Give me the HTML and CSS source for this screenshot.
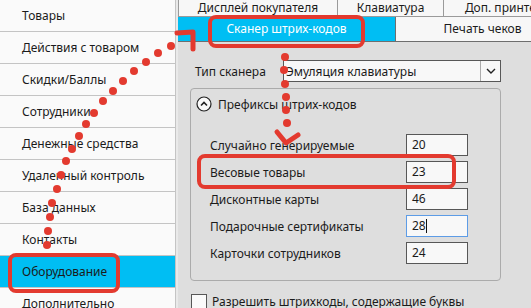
FILE: index.html
```html
<!DOCTYPE html>
<html>
<head>
  <title>Оборудование</title>
  <meta charset="utf-8">
  <link rel="stylesheet" href="styles.css">
</head>
<body>
  <div class="app">
    <ul class="nav">
      <li>Товары</li>
      <li>Действия с товаром</li>
      <li>Скидки/Баллы</li>
      <li>Сотрудники</li>
      <li>Денежные средства</li>
      <li>Удаленный контроль</li>
      <li>База данных</li>
      <li>Контакты</li>
      <li class="active">Оборудование</li>
      <li>Дополнительно</li>
    </ul>

    <div class="main">
      <div class="tabs tabs-top">
        <div class="tab t-display">Дисплей покупателя</div>
        <div class="tab t-keys">Клавиатура</div>
        <div class="tab t-printer">Доп. принтер</div>
      </div>
      <div class="tabs tabs-second">
        <div class="tab t-scanner active">Сканер штрих-кодов</div>
        <div class="tab t-receipt">Печать чеков</div>
      </div>

      <div class="panel">
        <div class="field">
          <span class="field-label">Тип сканера</span>
          <div class="select">
            <span class="select-value">Эмуляция клавиатуры</span>
            <span class="select-btn">
              <svg width="10" height="6" viewBox="0 0 10 6"><path d="M1 1 L5 5 L9 1" fill="none" stroke="#222" stroke-width="1.4"/></svg>
            </span>
          </div>
        </div>

        <div class="group">
          <div class="group-head">
            <svg class="collapse" width="16" height="16" viewBox="0 0 16 16">
              <circle cx="8" cy="8" r="7" fill="#fafafa" stroke="#222" stroke-width="1.2"/>
              <path d="M5 9.5 L8 6.5 L11 9.5" fill="none" stroke="#222" stroke-width="1.6"/>
            </svg>
            <span>Префиксы штрих-кодов</span>
          </div>
          <div class="rows">
            <div class="row"><span>Случайно генерируемые</span><div class="input">20</div></div>
            <div class="row"><span>Весовые товары</span><div class="input">23</div></div>
            <div class="row"><span>Дисконтные карты</span><div class="input">46</div></div>
            <div class="row"><span>Подарочные сертификаты</span><div class="input focus">28<i class="caret"></i></div></div>
            <div class="row"><span>Карточки сотрудников</span><div class="input">24</div></div>
          </div>
        </div>

        <div class="check">
          <span class="box"></span>
          <span>Разрешить штрихкоды, содержащие буквы</span>
        </div>
      </div>
    </div>
  </div>

  <svg class="marks" width="531" height="308" viewBox="0 0 531 308">
    <g fill="none" stroke="#e33a2f" stroke-width="4" stroke-linejoin="round">
      <rect x="10" y="255" width="108" height="36" rx="6"/>
      <rect x="210" y="17" width="153" height="29" rx="6"/>
      <rect x="199" y="156" width="255" height="31" rx="6"/>
    </g>
    <g fill="#e33a2f">
      <circle cx="47" cy="245" r="4"/>
      <circle cx="48" cy="231" r="4"/>
      <circle cx="50" cy="217" r="4"/>
      <circle cx="52" cy="203" r="4"/>
      <circle cx="57" cy="189" r="4"/>
      <circle cx="61" cy="175" r="4"/>
      <circle cx="66" cy="161" r="4"/>
      <circle cx="72" cy="149" r="4"/>
      <circle cx="79" cy="136" r="4"/>
      <circle cx="86" cy="124" r="4"/>
      <circle cx="94" cy="113" r="4"/>
      <circle cx="103" cy="101" r="4"/>
      <circle cx="113" cy="91" r="4"/>
      <circle cx="123" cy="81" r="4"/>
      <circle cx="134" cy="71" r="4"/>
      <circle cx="146" cy="62" r="4"/>
      <circle cx="158" cy="53" r="4"/>
      <circle cx="171" cy="46" r="4"/>
      <circle cx="285" cy="57" r="4"/>
      <circle cx="284" cy="70" r="4"/>
      <circle cx="285" cy="84" r="4"/>
      <circle cx="286" cy="97" r="4"/>
      <circle cx="286" cy="110" r="4"/>
      <circle cx="287" cy="123" r="4"/>
    </g>
    <g fill="none" stroke="#e33a2f" stroke-width="5" stroke-linecap="round" stroke-linejoin="round">
      <polyline points="177,33 193,32 193,49"/>
      <polyline points="277,132 286,143 298,135"/>
    </g>
  </svg>
</body>
</html>
```

FILE: styles.css
```css
body { margin: 0; width: 531px; height: 308px; overflow: hidden; position: relative; background: #e9e9e9; font-family: "Noto Sans", "Open Sans", sans-serif; font-size: 12px; color: #1b1b1b; }
.app { display: flex; height: 308px; }

.nav { list-style: none; margin: 0; padding: 0; width: 175px; flex: none; background: #fafafa; border-right: 1px solid #c4c4c4; }
.nav li { height: 31px; line-height: 31px; padding-left: 22px; border-bottom: 1px solid #c4c4c4; white-space: nowrap; }
.nav li.active { background: #00bef3; }

.main { flex: 1; margin-left: 2px; display: flex; flex-direction: column; min-width: 0; overflow: hidden; }
.tabs { display: flex; flex: none; white-space: nowrap; }
.tab { text-align: center; flex: none; }
.tabs-top { height: 16px; border-bottom: 1px solid #9a9a9a; background: #f7f7f7; }
.tabs-top .tab { line-height: 16px; border-right: 1px solid #9a9a9a; }
.t-display { width: 158px; border-left: 1px solid #9a9a9a; }
.t-keys { width: 105px; }
.t-printer { width: 120px; }
.tabs-second { height: 24px; border-bottom: 1px solid #6e6e6e; }
.tabs-second .tab { line-height: 24px; }
.t-scanner { width: 217px; }
.tab.active { background: #00bef3; color: #fff; }
.t-receipt { width: 173px; background: #f7f7f7; border-left: 1px solid #6e6e6e; }

.panel { flex: 1; background: #dedede; padding: 18px 30px 0 12px; }
.field { display: flex; align-items: center; }
.field-label { width: 88px; padding-left: 5px; }
.select { flex: 1; height: 20px; display: flex; align-items: center; background: #f8f8f8; border: 1px solid #575757; }
.select-value { flex: 1; padding-left: 2px; }
.select-btn { width: 19px; height: 20px; display: flex; align-items: center; justify-content: center; border-left: 1px solid #ababab; }

.group { margin-top: 6px; border: 1px solid #ababab; border-radius: 4px; padding: 0 0 16px 0; }
.group-head { height: 30px; display: flex; align-items: center; gap: 6px; padding-left: 5px; }
.rows { display: flex; flex-direction: column; gap: 5px; padding: 15px 32px 0 19px; }
.row { display: flex; align-items: center; justify-content: space-between; }
.input { width: 55px; height: 20px; line-height: 20px; padding-left: 5px; background: #f8f8f8; border: 1px solid #575757; position: relative; }
.input.focus { border-color: #5d9ce6; }
.caret { display: inline-block; width: 1px; height: 14px; background: #111; vertical-align: -3px; }

.check { display: flex; align-items: center; gap: 5px; margin-top: 12px; padding-left: 1px; }
.check .box { width: 14px; height: 14px; background: #fafafa; border: 1px solid #575757; }

.marks { position: absolute; left: 0; top: 0; pointer-events: none; }
```
